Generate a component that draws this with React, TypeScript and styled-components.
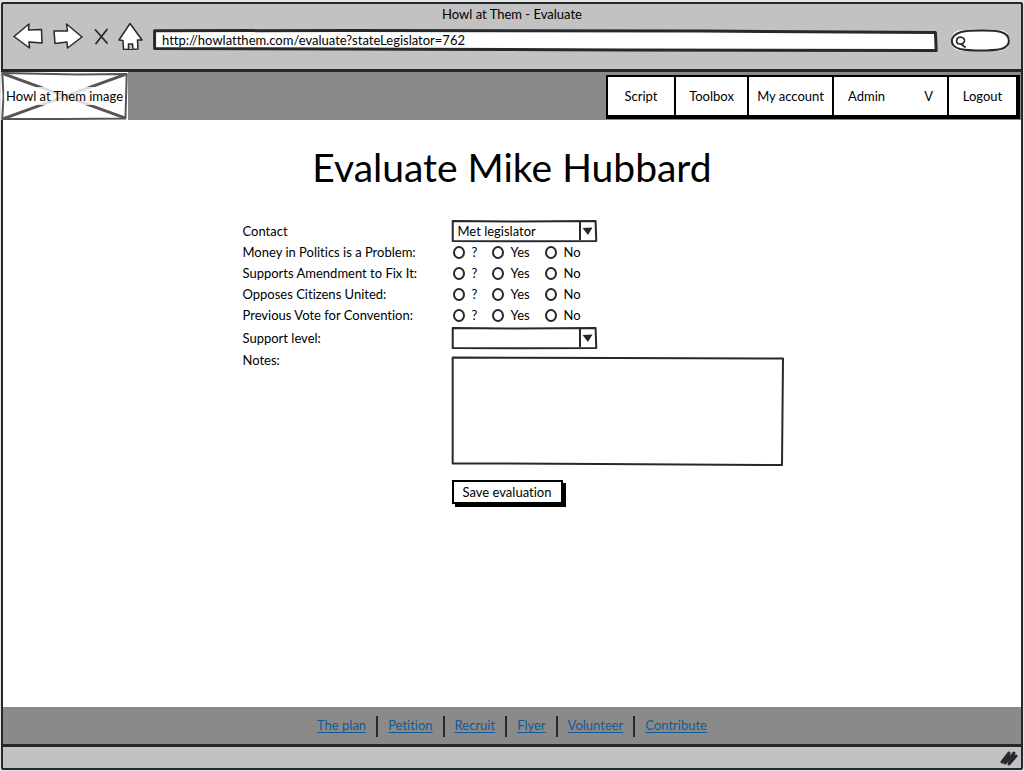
import React from "react";
import styled, { createGlobalStyle } from "styled-components";

const ink = "#26282d";

const GlobalStyle = createGlobalStyle`
  *, *::before, *::after { box-sizing: border-box; }
  body {
    margin: 0;
    background: #e4e4e4;
    color: #000;
    font: 13px/21px Lato, "Open Sans", sans-serif;
    font-variant-ligatures: none;
  }
  button, input, select, textarea {
    font: inherit;
    font-variant-ligatures: none;
    color: inherit;
  }
`;

const BrowserWindow = styled.div`
  display: flex;
  flex-direction: column;
  min-height: 100vh;
  padding: 2px 1px 1px;
`;

const Frame = styled.div`
  flex: 1;
  display: flex;
  flex-direction: column;
  border: 2px solid ${ink};
  border-radius: 2px;
  background: #fff;
`;

const Chrome = styled.header`
  height: 68px;
  flex: none;
  background: #c2c2c2;
  border-bottom: 3px solid ${ink};
`;

const WindowTitle = styled.div`
  height: 17px;
  line-height: 20px;
  text-align: center;
`;

const Toolbar = styled.div`
  display: flex;
  align-items: center;
  height: 32px;
  padding: 0 11px 0 10px;
`;

const ToolButtons = styled.div`
  display: flex;
  align-items: center;
  gap: 10px;
  width: 140px;
  flex: none;
  margin-bottom: 2px;
`;

const ToolButton = styled.button<{ $width: number }>`
  width: ${(p) => p.$width}px;
  height: 28px;
  padding: 0;
  border: 0;
  background: none;
  svg { display: block; }
`;

const Field = styled.div<{ $width?: string; $height: number }>`
  position: relative;
  flex: ${(p) => (p.$width ? "none" : "1")};
  width: ${(p) => p.$width ?? "auto"};
  height: ${(p) => p.$height}px;
`;

const Outline = styled.svg`
  position: absolute;
  inset: 0;
  width: 100%;
  height: 100%;
  overflow: visible;
  pointer-events: none;
  path {
    fill: none;
    stroke-linejoin: round;
    vector-effect: non-scaling-stroke;
  }
`;

const AddressInput = styled.input`
  display: block;
  width: 100%;
  height: 18px;
  padding: 0 9px;
  border: 0;
  background: #fff;
  outline: none;
`;

const AddressField = styled(Field)`
  margin: 7px 14px 0 0;
  padding-top: 1px;
`;

const SearchField = styled(Field)`
  margin-top: 6px;
`;

const SearchInput = styled.input`
  display: block;
  width: 100%;
  height: 100%;
  padding: 0 8px 0 18px;
  border: 0;
  border-radius: 12px;
  background: #fff;
  outline: none;
`;

const SearchIcon = styled.svg`
  position: absolute;
  left: 3px;
  top: 5px;
`;

const SiteHeader = styled.div`
  display: flex;
  justify-content: space-between;
  height: 48px;
  flex: none;
  background: #8c8a88;
`;

const Logo = styled.div`
  position: relative;
  display: flex;
  align-items: center;
  justify-content: center;
  width: 127px;
  margin-left: -2px;
  background: #fff;
`;

const LogoText = styled.span`
  position: relative;
  padding: 0 2px;
  height: 18px;
  line-height: 18px;
  border-radius: 5px;
  background: rgba(255, 255, 255, 0.8);
  white-space: nowrap;
`;

const Nav = styled.nav`
  display: flex;
  height: 44px;
  margin: 3px 1px 0 0;
  background: #000;
  padding: 2px 4px 4px 2px;
  gap: 2px;
`;

const NavItem = styled.a<{ $width: number }>`
  display: flex;
  align-items: center;
  justify-content: ${(p) => (p.$width > 100 ? "space-between" : "center")};
  width: ${(p) => p.$width}px;
  padding: 0 ${(p) => (p.$width > 100 ? 14 : 0)}px;
  background: #fff;
  color: #000;
  text-decoration: none;
`;

const Main = styled.main`
  flex: 1;
  padding: 18px 16px;
`;

const Heading = styled.h1`
  margin: 0 0 24px;
  font-size: 39px;
  line-height: 58px;
  font-weight: 400;
  text-align: center;
`;

const Form = styled.form`
  width: 100%;
  max-width: 541px;
  margin: 0 auto;
`;

const Row = styled.div<{ $spaced?: boolean }>`
  display: grid;
  grid-template-columns: 210px 1fr;
  align-items: start;
  margin-top: ${(p) => (p.$spaced ? 1 : 0)}px;
  > label {
    padding-left: 1px;
    line-height: 22px;
  }
`;

const RadioRow = styled.fieldset`
  display: grid;
  grid-template-columns: 210px 1fr;
  margin: 0;
  padding: 0;
  border: 0;
  > span { padding-left: 1px; }
`;

const RadioGroup = styled.div`
  display: grid;
  grid-template-columns: 39px 53px 1fr;
`;

const RadioLabel = styled.label`
  display: flex;
  align-items: center;
  gap: 7px;
  height: 21px;
`;

const Radio = styled.input`
  appearance: none;
  width: 12px;
  height: 13px;
  margin: 0 0 0 1px;
  border: 2px solid ${ink};
  border-radius: 50%;
  background: #fff;
  &:checked { background: ${ink}; box-shadow: inset 0 0 0 2px #fff; }
`;

const Select = styled.select`
  appearance: none;
  display: block;
  width: 100%;
  height: 100%;
  padding: 0 20px 0 6px;
  border: 0;
  background: transparent;
  outline: none;
`;

const Arrow = styled.svg`
  position: absolute;
  right: 0;
  top: 0;
  pointer-events: none;
`;

const NotesField = styled(Field)`
  margin-top: 8px;
`;

const Notes = styled.textarea`
  display: block;
  width: 100%;
  height: 100%;
  padding: 4px 6px;
  border: 0;
  background: transparent;
  resize: none;
  outline: none;
`;

const Save = styled.button`
  height: 24px;
  width: 111px;
  margin: 15px 0 0 210px;
  padding: 0;
  border: 2px solid #000;
  background: #fff;
  box-shadow: 3px 3px 0 #000;
  line-height: 20px;
`;

const Footer = styled.footer`
  flex: none;
  height: 37px;
  background: #8c8a88;
`;

const FooterLinks = styled.ul`
  display: flex;
  justify-content: center;
  margin: 0;
  padding: 9px 0 0;
  list-style: none;
`;

const FooterItem = styled.li`
  padding: 0 10px;
  height: 21px;
  line-height: 19px;
  & + & { border-left: 2px solid ${ink}; }
  a { color: #0f5a9c; text-underline-offset: 2px; }
`;

const StatusBar = styled.div`
  display: flex;
  align-items: center;
  justify-content: flex-end;
  height: 24px;
  flex: none;
  padding-right: 3px;
  background: #c2c2c2;
  border-top: 3px solid ${ink};
`;

const shapes = {
  address: "M0.2 4 L25 2 L70 5 L99.800 12 L99.900 98 L60 95 L0.200 88 Z",
  image: "M1 2 L60 5 L99 4 L98 97 L50 98 L1 98 L2 50 Z",
  select: "M0.500 4 L45 7 L99 4 L99.500 95 L50 97 L0.500 95 Z",
  notes: "M0.200 0.500 L50 1 L100 1.500 L99.700 100 L45 99 L0.200 98.500 Z",
};

function Sketch({ shape, stroke = 2, color = ink }: { shape: keyof typeof shapes; stroke?: number; color?: string }) {
  return (
    <Outline viewBox="0 0 100 100" preserveAspectRatio="none" aria-hidden="true">
      <path d={shapes[shape]} stroke={color} strokeWidth={stroke} />
    </Outline>
  );
}

function Dropdown({ id, options }: { id: string; options: string[] }) {
  return (
    <Field $width="145px" $height={22}>
      <Select id={id} defaultValue={options[0]}>
        {options.map((o) => (
          <option key={o}>{o}</option>
        ))}
      </Select>
      <Sketch shape="select" />
      <Arrow width="18" height="22" viewBox="0 0 18 22" aria-hidden="true">
        <path d="M1 2 L1 20" stroke={ink} strokeWidth="2" />
        <path d="M3.500 8 L13.500 7.500 L9 15 Z" fill={ink} />
      </Arrow>
    </Field>
  );
}

function Question({ name, text }: { name: string; text: string }) {
  return (
    <RadioRow aria-labelledby={name}>
      <span id={name}>{text}</span>
      <RadioGroup>
        {["?", "Yes", "No"].map((value) => (
          <RadioLabel key={value}>
            <Radio type="radio" name={name} value={value} />
            {value}
          </RadioLabel>
        ))}
      </RadioGroup>
    </RadioRow>
  );
}

const questions = [
  { name: "money", text: "Money in Politics is a Problem:" },
  { name: "amendment", text: "Supports Amendment to Fix It:" },
  { name: "citizens", text: "Opposes Citizens United:" },
  { name: "convention", text: "Previous Vote for Convention:" },
];

const links = ["The plan", "Petition", "Recruit", "Flyer", "Volunteer", "Contribute"];

export default function App() {
  const line = { fill: "#fff", stroke: ink, strokeWidth: 1.5, strokeLinejoin: "round" as const };
  return (
    <BrowserWindow>
      <GlobalStyle />
      <Frame>
        <Chrome>
          <WindowTitle>Howl at Them - Evaluate</WindowTitle>
          <Toolbar>
            <ToolButtons>
              <ToolButton $width={30} aria-label="Back">
                <svg width="30" height="28" viewBox="0 0 30 28">
                  <path d="M1 14.500 L16 2 L15.500 8 L28.500 7.500 L29 21 L16 20 L16.500 26 Z" {...line} />
                </svg>
              </ToolButton>
              <ToolButton $width={30} aria-label="Forward">
                <svg width="30" height="28" viewBox="0 0 30 28">
                  <path d="M1 9 L14.500 9 L13.500 2 L29 15 L14.500 26 L14 20 L2 21.500 Z" {...line} />
                </svg>
              </ToolButton>
              <ToolButton $width={15} aria-label="Stop">
                <svg width="15" height="28" viewBox="0 0 15 28">
                  <path d="M2.500 8 L14 21 M14 7.500 L3 21.500" stroke={ink} strokeWidth="1.800" strokeLinecap="round" />
                </svg>
              </ToolButton>
              <ToolButton $width={25} aria-label="Home">
                <svg width="25" height="28" viewBox="0 0 25 28">
                  <path d="M12 1.500 L24 18 L19.500 18 L20 27 L5.500 27.500 L5 18.500 L1 18 Z" {...line} />
                  <path d="M10.500 27 L10.500 22 L14.500 22 L15 27" fill="#c2c2c2" stroke={ink} strokeWidth="1.500" />
                </svg>
              </ToolButton>
            </ToolButtons>
            <AddressField $height={21}>
              <AddressInput aria-label="Address" defaultValue="http://howlatthem.com/evaluate?stateLegislator=762" />
              <Sketch shape="address" stroke={3} />
            </AddressField>
            <SearchField $width="59px" $height={21}>
              <SearchInput aria-label="Search" />
              <Outline viewBox="0 0 59 21" preserveAspectRatio="none" aria-hidden="true">
                <path d="M10 2 C20 0 42 0 50 2 C60 5 61 16 50 19 C40 21 20 21 9 19 C-2 16 -2 6 10 2 Z" stroke={ink} strokeWidth="2" />
              </Outline>
              <SearchIcon width="14" height="14" viewBox="0 0 14 14" aria-hidden="true">
                <path d="M3 4 C5 1 10 2 10.500 5 C11 8 8 9.500 5.500 9 C2.500 8.500 2 6 3 4 Z" fill="none" stroke={ink} strokeWidth="1.700" />
                <path d="M7.500 9.500 L11 12" stroke={ink} strokeWidth="1.800" strokeLinecap="round" />
              </SearchIcon>
            </SearchField>
          </Toolbar>
        </Chrome>

        <SiteHeader>
          <Logo>
            <Outline viewBox="0 0 100 100" preserveAspectRatio="none" aria-hidden="true">
              <path d="M2 4 L98 96 M98 5 L2 97" stroke="#555557" strokeWidth="3" />
            </Outline>
            <Sketch shape="image" color="#555557" />
            <LogoText>Howl at Them image</LogoText>
          </Logo>
          <Nav>
            <NavItem href="#script" $width={66}>Script</NavItem>
            <NavItem href="#toolbox" $width={71}>Toolbox</NavItem>
            <NavItem href="#account" $width={83}>My account</NavItem>
            <NavItem href="#admin" $width={113}>
              <span>Admin</span>
              <span>V</span>
            </NavItem>
            <NavItem href="#logout" $width={67}>Logout</NavItem>
          </Nav>
        </SiteHeader>

        <Main>
          <Heading>Evaluate Mike Hubbard</Heading>
          <Form onSubmit={(e) => e.preventDefault()}>
            <Row>
              <label htmlFor="contact">Contact</label>
              <Dropdown id="contact" options={["Met legislator"]} />
            </Row>
            {questions.map((q) => (
              <Question key={q.name} {...q} />
            ))}
            <Row $spaced>
              <label htmlFor="support">Support level:</label>
              <Dropdown id="support" options={[""]} />
            </Row>
            <Row>
              <label htmlFor="notes">Notes:</label>
              <NotesField $height={108}>
                <Notes id="notes" />
                <Sketch shape="notes" />
              </NotesField>
            </Row>
            <Save type="submit">Save evaluation</Save>
          </Form>
        </Main>

        <Footer>
          <FooterLinks>
            {links.map((text) => (
              <FooterItem key={text}>
                <a href={`#${text.toLowerCase().replace(" ", "-")}`}>{text}</a>
              </FooterItem>
            ))}
          </FooterLinks>
        </Footer>
        <StatusBar>
          <svg width="18" height="16" viewBox="0 0 18 16" aria-hidden="true">
            <path d="M2 12 L9 3 L5 13 L14 3 L9 14 L16 6" fill="none" stroke={ink} strokeWidth="3" strokeLinecap="round" strokeLinejoin="round" />
          </svg>
        </StatusBar>
      </Frame>
    </BrowserWindow>
  );
}
